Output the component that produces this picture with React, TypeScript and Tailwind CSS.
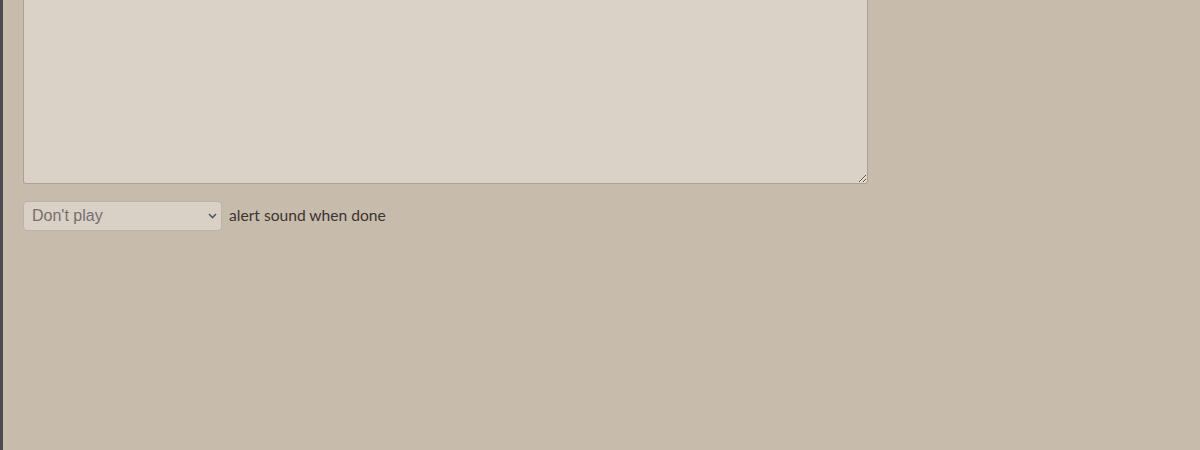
export default function App() {
  return (
    <div className="flex h-[450px] w-[1200px] overflow-hidden bg-[#c7bbab]">
      <div className="w-[3px] shrink-0 bg-[#4b4b4d]" />
      <div className="flex flex-col pl-[20px]">
        <textarea
          className="block h-[184px] w-[845px] resize rounded-b-[3px] border border-t-0 border-[#ada292] bg-[#dad2c6] outline-none"
          defaultValue=""
        />
        <div className="mt-[17px] flex items-center gap-[7px]">
          <div className="relative">
            <select
              className="h-[30px] w-[199px] appearance-none rounded-[4px] border border-[#bdb2a3] bg-[#d9d1c5] pl-[8px] pr-6 font-['Liberation_Sans',Arial,sans-serif] text-[16px] text-[#77706a] outline-none"
              defaultValue="none"
            >
              <option value="none">Don't play</option>
              <option value="chime">Play</option>
            </select>
            <svg
              className="pointer-events-none absolute right-[5px] top-[12px]"
              width="9"
              height="6"
              viewBox="0 0 9 6"
              fill="none"
            >
              <path d="M1 1l3.5 3.5L8 1" stroke="#4f5a66" strokeWidth="1.6" />
            </svg>
          </div>
          <span className="-mt-px font-['Lato',sans-serif] text-[15.6px] text-[#3a3531]">
            alert sound when done
          </span>
        </div>
      </div>
    </div>
  )
}
